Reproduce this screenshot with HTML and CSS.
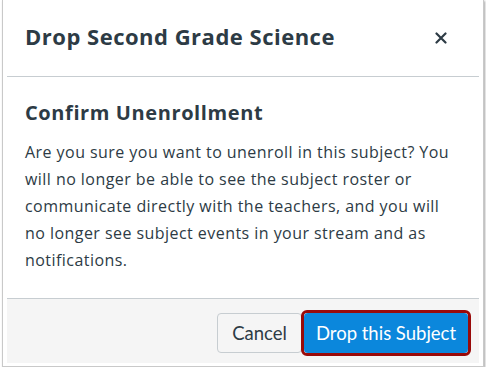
FILE: index.html
```html
<!DOCTYPE html>
<html>
<head>
<meta charset="utf-8">
<link rel="stylesheet" href="styles.css">
</head>
<body>
<div class="frame">
  <div class="modal">
    <div class="header">
      <h1 class="title">Drop Second Grade Science</h1>
      <span class="close">
        <svg width="12" height="12" viewBox="0 0 12 12"><path d="M1.5 1.5 L10.5 10.5 M10.5 1.5 L1.5 10.5" stroke="#2d3b45" stroke-width="2.2" stroke-linecap="round"/></svg>
      </span>
    </div>
    <div class="body">
      <h2 class="subtitle">Confirm Unenrollment</h2>
      <p class="text">Are you sure you want to unenroll in this subject? You will no longer be able to see the subject roster or communicate directly with the teachers, and you will no longer see subject events in your stream and as notifications.</p>
    </div>
    <div class="footer">
      <button class="btn cancel">Cancel</button>
      <span class="focus"><button class="btn primary">Drop this Subject</button></span>
    </div>
  </div>
</div>
</body>
</html>
```
FILE: styles.css
```css
html, body { margin: 0; padding: 0; background: #fff; }
.frame {
  margin-left: 2px;
  width: 472px;
  height: 363px;
  padding: 0 4px 3px 4px;
  border: 1px solid #c9c9c9;
  border-top: none;
  box-shadow: 1px 1px 2px rgba(0,0,0,0.35);
  background: #fff;
}
.modal { display: flex; flex-direction: column; height: 363px; color: #2d3b45; }
.header {
  border-bottom: 1px solid #c7cdd1;
  display: flex;
  align-items: center;
  justify-content: space-between;
  padding: 0 32px 4px 18px;
  box-sizing: border-box;
  height: 77px;
}
.title { margin: 0; font-family: "Open Sans", sans-serif; font-weight: 700; font-size: 22px; letter-spacing: 0.5px; }
.close { display: flex; width: 12px; height: 12px; margin-top: 4px; }
.body { flex: 1; padding: 22px 18px 0 18px; }
.subtitle { margin: 0 0 12px 0; font-family: "Open Sans", sans-serif; font-weight: 700; font-size: 20px; line-height: 28px; letter-spacing: 0.6px; }
.text { margin: 0; width: 432px; font-family: "Open Sans", sans-serif; font-size: 16px; line-height: 27px; letter-spacing: 0.45px; }
.footer {
  height: 61px;
  border-top: 1px solid #c7cdd1;
  background: #f5f5f5;
  display: flex;
  align-items: center;
  justify-content: flex-end;
  padding: 3px 8px 0 0;
}
.btn {
  font-family: "Lato", sans-serif;
  font-size: 18.5px;
  height: 40px;
  border-radius: 4px;
  padding: 0 10px;
  cursor: pointer;
}
.cancel { background: #f5f5f5; border: 1px solid #c7cdd1; color: #2d3b45; width: 85px; }
.focus {
  display: flex;
  border: 3px solid #990a0a;
  border-radius: 6px;
  margin-left: -1px;
}
.primary { background: #0b87dc; border: none; color: #fff; width: 164px; height: 40px; }
```
